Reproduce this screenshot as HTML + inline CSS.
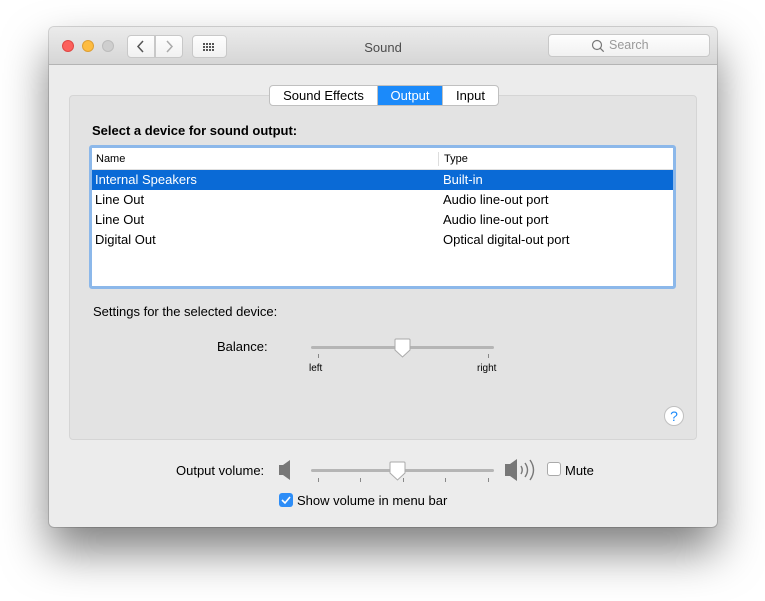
<!DOCTYPE html>
<html><head><meta charset="utf-8"><style>
*{box-sizing:border-box;margin:0;padding:0}
body{width:765px;height:601px;background:#fff;position:relative;overflow:hidden;font-family:"Liberation Sans",sans-serif;font-size:13px;color:#000}
.win{position:absolute;left:49px;top:27px;width:668px;height:500px;background:#ececec;border-radius:5px;box-shadow:0 0 0 1px rgba(0,0,0,.15),0 24px 45px rgba(0,0,0,.5)}
.tb{position:absolute;left:0;top:0;width:668px;height:38px;background:linear-gradient(#ebebeb,#d6d6d6);border-bottom:1px solid #b4b4b4;border-radius:5px 5px 0 0}
.dot{position:absolute;top:13px;width:12px;height:12px;border-radius:50%}
.btn{position:absolute;top:8px;height:23px;background:linear-gradient(#fefefe,#f1f1f1);border:1px solid #c8c8c8;border-radius:4px}
.title{position:absolute;left:0;width:668px;top:13px;text-align:center;color:#4d4d4d;font-size:13px}
.grp{position:absolute;left:20px;top:68px;width:628px;height:345px;background:#e3e3e3;border:1px solid #d5d5d5;border-radius:4px}
.tabs{position:absolute;left:220px;top:58px;height:21px;display:flex;border:1px solid #c0c0c0;border-radius:4px;background:#fff;overflow:hidden}
.tabs div{line-height:19px;font-size:13px;text-align:center}
.abs{position:absolute;white-space:nowrap}
.tbl{position:absolute;left:40px;top:118px;width:587px;height:144px;border:3px solid #8cb8ea;border-radius:3px;background:#fff}
.row{position:absolute;left:0;width:581px;height:20px;line-height:20px}
.row span{position:absolute}
.track{position:absolute;height:3px;background:#b5b5b5;border-radius:2px}
.tick{position:absolute;width:1px;height:4px;background:#888}
</style></head><body>
<div class="win">
 <div class="tb">
  <div class="dot" style="left:13px;background:#fc605c;border:1px solid #df4744"></div>
  <div class="dot" style="left:33px;background:#fdbc40;border:1px solid #de9f34"></div>
  <div class="dot" style="left:53px;background:#cecece;border:1px solid #bcbcbc"></div>
  <div class="btn" style="left:78px;width:28px;border-radius:4px 0 0 4px"><svg width="26" height="21"><path d="M15 5l-5 5.5 5 5.5" fill="none" stroke="#555" stroke-width="1.5"/></svg></div>
  <div class="btn" style="left:106px;width:28px;border-radius:0 4px 4px 0"><svg width="26" height="21"><path d="M11 5l5 5.5-5 5.5" fill="none" stroke="#aaa" stroke-width="1.5"/></svg></div>
  <div class="btn" style="left:143px;width:35px"><svg width="33" height="21"><g fill="#555"><rect x="10" y="7" width="2" height="2"/><rect x="13" y="7" width="2" height="2"/><rect x="16" y="7" width="2" height="2"/><rect x="19" y="7" width="2" height="2"/><rect x="10" y="10" width="2" height="2"/><rect x="13" y="10" width="2" height="2"/><rect x="16" y="10" width="2" height="2"/><rect x="19" y="10" width="2" height="2"/><rect x="10" y="13" width="2" height="2"/><rect x="13" y="13" width="2" height="2"/><rect x="16" y="13" width="2" height="2"/><rect x="19" y="13" width="2" height="2"/></g></svg></div>
  <div class="title">Sound</div>
  <div class="btn" style="left:499px;width:162px;top:7px"><svg class="abs" style="left:41px;top:3px" width="16" height="16"><circle cx="7" cy="7" r="4.5" fill="none" stroke="#777" stroke-width="1.2"/><path d="M10.2 10.2l3.5 3.5" stroke="#777" stroke-width="1.3"/></svg><span class="abs" style="left:60px;top:3px;color:#999;font-size:12.5px">Search</span></div>
 </div>
 <div class="grp"></div>
 <div class="tabs"><div style="width:107px">Sound Effects</div><div style="width:66px;background:#1b8afa;color:#fff;border-left:1px solid #c0c0c0;border-right:1px solid #c0c0c0">Output</div><div style="width:55px">Input</div></div>
 <div class="abs" style="left:43px;top:96px;font-weight:bold">Select a device for sound output:</div>
 <div class="tbl">
  <div class="row" style="top:0;height:22px;font-size:11px;border-bottom:1px solid #e0e0e0"><span style="left:4px;top:1px">Name</span><span style="left:346px;top:4px;height:14px;width:1px;background:#ddd"></span><span style="left:352px;top:1px">Type</span></div>
  <div class="row" style="top:22px;background:#0a6ad6;color:#fff"><span style="left:3px">Internal Speakers</span><span style="left:351px">Built-in</span></div>
  <div class="row" style="top:42px"><span style="left:3px">Line Out</span><span style="left:351px">Audio line-out port</span></div>
  <div class="row" style="top:62px"><span style="left:3px">Line Out</span><span style="left:351px">Audio line-out port</span></div>
  <div class="row" style="top:82px"><span style="left:3px">Digital Out</span><span style="left:351px">Optical digital-out port</span></div>
 </div>
 <div class="abs" style="left:44px;top:277px">Settings for the selected device:</div>
 <div class="abs" style="left:168px;top:312px">Balance:</div>
 <div class="track" style="left:262px;top:319px;width:183px"></div>
 <svg class="abs" style="left:345px;top:311px" width="18" height="22"><path d="M2 1h13a1 1 0 0 1 1 1v10l-7.5 7-7.5-7V2a1 1 0 0 1 1-1z" fill="#fff" stroke="#aaa"/></svg>
 <div class="tick" style="left:269px;top:327px"></div><div class="tick" style="left:439px;top:327px"></div>
 <div class="abs" style="left:260px;top:336px;font-size:10px">left</div>
 <div class="abs" style="left:428px;top:336px;font-size:10px">right</div>
 <svg class="abs" style="left:614px;top:378px" width="22" height="22"><circle cx="11" cy="11" r="9.5" fill="#fff" stroke="#c0c0c0"/><text x="11" y="16" text-anchor="middle" font-family="Liberation Sans" font-size="14" fill="#1b8afa">?</text></svg>
 <div class="abs" style="left:127px;top:436px">Output volume:</div>
 <svg class="abs" style="left:229px;top:432px" width="16" height="22"><path d="M1 6h4l7-5v20l-7-5H1z" fill="#777"/></svg>
 <div class="track" style="left:262px;top:442px;width:183px"></div>
 <svg class="abs" style="left:340px;top:434px" width="18" height="22"><path d="M2 1h13a1 1 0 0 1 1 1v10l-7.5 7-7.5-7V2a1 1 0 0 1 1-1z" fill="#fff" stroke="#aaa"/></svg>
 <div class="tick" style="left:269px;top:451px"></div><div class="tick" style="left:311px;top:451px"></div><div class="tick" style="left:354px;top:451px"></div><div class="tick" style="left:396px;top:451px"></div><div class="tick" style="left:439px;top:451px"></div>
 <svg class="abs" style="left:455px;top:430px" width="36" height="26"><path d="M1 7h5l7-5v22l-7-5H1z" fill="#777"/><g fill="none" stroke="#777" stroke-width="1.4"><path d="M17 9q2.5 4 0 8"/><path d="M21 6q5 7 0 14"/><path d="M26 3q7 10 0 20"/></g></svg>
 <div class="abs" style="left:498px;top:435px;width:14px;height:14px;border:1px solid #aaa;border-radius:3px;background:#fff"></div>
 <div class="abs" style="left:516px;top:436px">Mute</div>
 <div class="abs" style="left:230px;top:466px;width:14px;height:14px;border-radius:3px;background:#2d8df7"><svg width="14" height="14"><path d="M3 7l3 3 5-6" fill="none" stroke="#fff" stroke-width="1.6"/></svg></div>
 <div class="abs" style="left:248px;top:466px">Show volume in menu bar</div>
</div>
</body></html>
